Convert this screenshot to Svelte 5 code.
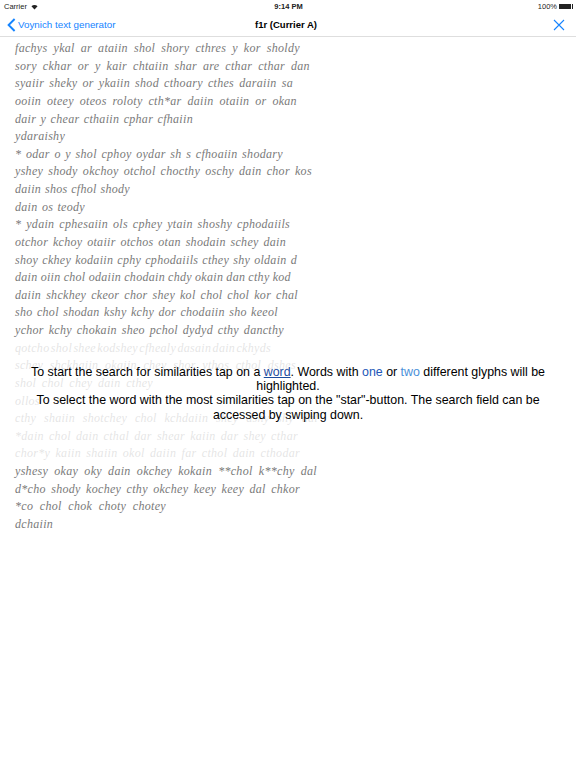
<script>
  // right edge of each manuscript line (px) keeps the ragged block close to the page
  const lines = [
    ["fachys ykal ar ataiin shol shory cthres y kor sholdy", 300],
    ["sory ckhar or y kair chtaiin shar are cthar cthar dan", 310],
    ["syaiir sheky or ykaiin shod cthoary cthes daraiin sa", 293],
    ["ooiin oteey oteos roloty cth*ar daiin otaiin or okan", 297],
    ["dair y chear cthaiin cphar cfhaiin", 193],
    ["ydaraishy", 62],
    ["* odar o y shol cphoy oydar sh s cfhoaiin shodary", 283],
    ["yshey shody okchoy otchol chocthy oschy dain chor kos", 312],
    ["daiin shos cfhol shody", 130],
    ["dain os teody", 85],
    ["* ydain cphesaiin ols cphey ytain shoshy cphodaiils", 290],
    ["otchor kchoy otaiir otchos otan shodain schey dain", 286],
    ["shoy ckhey kodaiin cphy cphodaiils cthey shy oldain d", 297],
    ["dain oiin chol odaiin chodain chdy okain dan cthy kod", 291],
    ["daiin shckhey ckeor chor shey kol chol chol kor chal", 298],
    ["sho chol shodan kshy kchy dor chodaiin sho keeol", 278],
    ["ychor kchy chokain sheo pchol dydyd cthy dancthy", 284],
    ["qotcho shol shee kodshey cfhealy dasain dain ckhyds", 271],
    ["schey shckhaiin okaiin chey shor ythos cthol dshes", 296],
    ["shol chol chey dain cthey", 153],
    ["ollos", 55],
    ["cthy shaiin shotchey chol kchdaiin shey dshy shy dal", 318],
    ["*dain chol dain cthal dar shear kaiin dar shey cthar", 298],
    ["chor*y kaiin shaiin okol daiin far cthol dain cthodar", 300],
    ["yshesy okay oky dain okchey kokain **chol k**chy dal", 317],
    ["d*cho shody kochey cthy okchey keey keey dal chkor", 300],
    ["*co chol chok choty chotey", 166],
    ["dchaiin", 48]
  ];
</script>

<div class="page">
  <div class="status">
    <div class="status-left">
      <span>Carrier</span>
      <svg width="7" height="6" viewBox="0 0 10 8" aria-hidden="true">
        <path d="M5 7.6 L0.6 2.8 C3 0.6 7 0.6 9.4 2.8 Z" fill="#222" />
      </svg>
    </div>
    <div class="status-time">9:14 PM</div>
    <div class="status-right">
      <span>100%</span>
      <span class="battery"><span class="battery-fill"></span></span>
    </div>
  </div>

  <header class="nav">
    <div class="back">
      <svg width="9" height="14" viewBox="0 0 9 14" aria-hidden="true">
        <path d="M7.6 1 L1.6 7 L7.6 13" fill="none" stroke="#1584ff" stroke-width="1.9" />
      </svg>
      <span>Voynich text generator</span>
    </div>
    <div class="title">f1r (Currier A)</div>
    <svg class="close" width="12" height="12" viewBox="0 0 12 12" aria-hidden="true">
      <path d="M1 1 L11 11 M11 1 L1 11" fill="none" stroke="#1584ff" stroke-width="1.1" />
    </svg>
  </header>

  <main class="folio">
    {#each lines as [text, right]}
      <div class="line" style="width: {right - 15}px">
        {#each text.split(" ") as word}
          <span>{word}</span>
        {/each}
      </div>
    {/each}
  </main>

  <div class="hint">
    <p>
      To start the search for similarities tap on a <a href="#word">word</a>. Words with
      <span class="one">one</span> or <span class="two">two</span> different glyphs will be highlighted.
    </p>
    <p>
      To select the word with the most similarities tap on the "star"-button. The search field can be
      accessed by swiping down.
    </p>
  </div>
</div>

<style>
  :global(body) {
    margin: 0;
    background: #ffffff;
  }

  .page {
    position: relative;
    width: 576px;
    height: 768px;
    overflow: hidden;
    font-family: "Liberation Sans", Arial, sans-serif;
    color: #000000;
  }

  .status {
    display: grid;
    grid-template-columns: 1fr auto 1fr;
    align-items: center;
    height: 13px;
    padding: 0 3px 0 4px;
    font-size: 7.5px;
    color: #222222;
  }

  .status-left {
    display: flex;
    align-items: center;
    gap: 4px;
  }

  .status-time {
    font-weight: 700;
  }

  .status-right {
    display: flex;
    justify-content: flex-end;
    align-items: center;
    gap: 2px;
  }

  .battery {
    display: block;
    width: 14px;
    height: 5px;
    padding-right: 1px;
    border-right: 1px solid #222222;
    box-sizing: border-box;
  }

  .battery-fill {
    display: block;
    height: 100%;
    background: #222222;
  }

  .nav {
    display: grid;
    grid-template-columns: 1fr auto 1fr;
    align-items: center;
    height: 23px;
    padding: 0 11px 0 7px;
    border-bottom: 1px solid #dedede;
  }

  .back {
    display: flex;
    align-items: center;
    gap: 2px;
    font-size: 9.8px;
    color: #1584ff;
  }

  .title {
    font-size: 9.5px;
    font-weight: 700;
  }

  .close {
    justify-self: end;
  }

  .folio {
    padding: 3px 0 0 15px;
    font-family: "Liberation Serif", serif;
    font-style: italic;
    font-size: 12px;
    letter-spacing: 0.3px;
    line-height: 17.63px;
    color: #7a7a7a;
  }

  .line {
    display: flex;
    justify-content: space-between;
    height: 17.63px;
    white-space: nowrap;
  }

  .hint {
    position: absolute;
    top: 340px;
    left: 0;
    right: 0;
    height: 125px;
    box-sizing: border-box;
    padding: 25px 28px 0;
    background: rgba(255, 255, 255, 0.8);
    font-size: 12.4px;
    line-height: 14.2px;
    text-align: center;
  }

  .hint p {
    margin: 0;
  }

  .hint a {
    color: #1c4c9e;
    text-decoration: underline;
  }

  .one {
    color: #2156b8;
  }

  .two {
    color: #4a90d9;
  }
</style>
